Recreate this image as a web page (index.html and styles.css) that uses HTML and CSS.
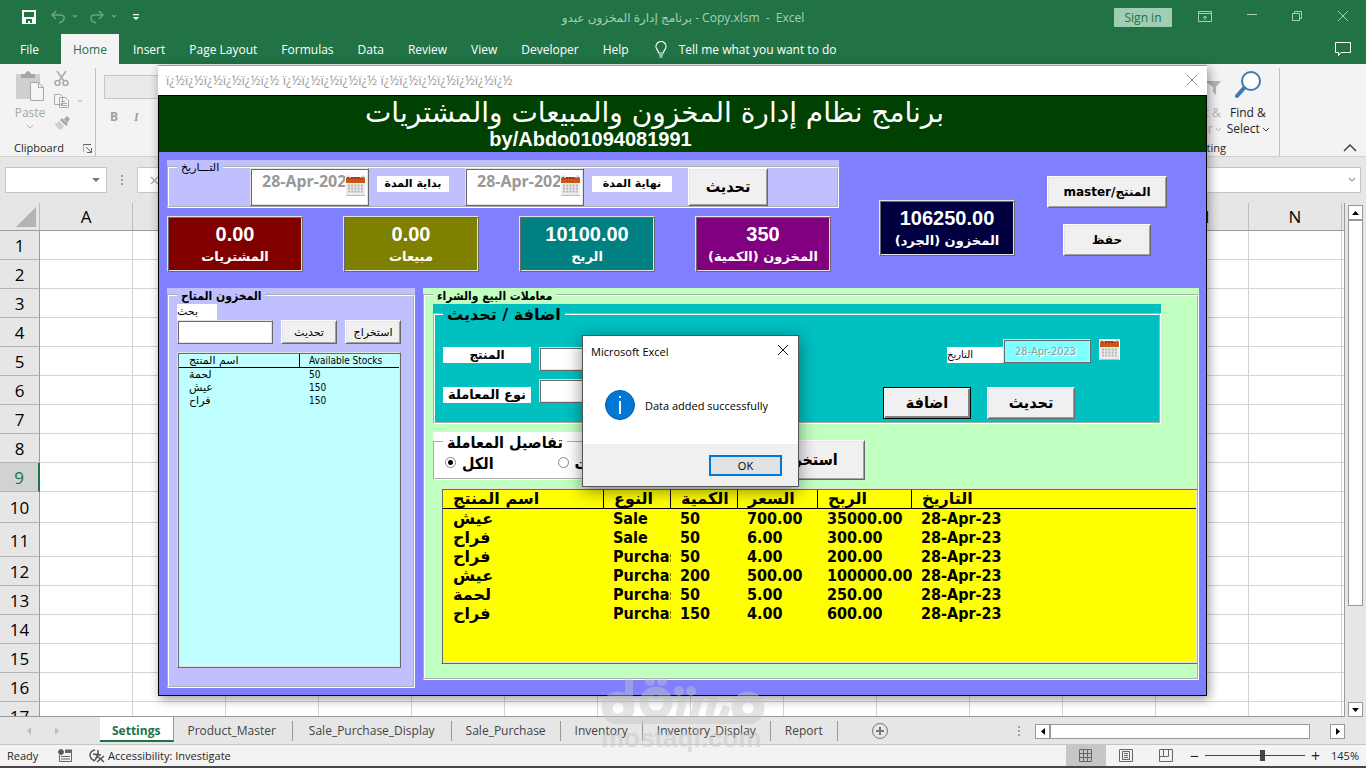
FILE: index.html
```html
<!DOCTYPE html>
<html lang="en">
<head>
<meta charset="utf-8">
<title>Excel - Inventory</title>
<link rel="stylesheet" href="styles.css">
</head>
<body>
<svg class="defs" aria-hidden="true">
  <symbol id="calendar" viewBox="0 0 21 21">
    <rect width="21" height="21" fill="#fff"/>
    <rect x="1" y="7" width="19" height="13" fill="#ececec"/>
    <rect x="1" y="2" width="19" height="6" fill="#c55a11"/>
    <path d="M3 3h15" stroke="#a02b2b" stroke-width="2" stroke-dasharray="2 1"/>
    <path d="M1 3a2 2 0 0 1 4 0M16 3a2 2 0 0 1 4 0" fill="none" stroke="#ddd" stroke-width="1.5"/>
    <path d="M3 10.500h15M3 13.500h15M3 16.500h15" stroke="#b5b5b5" stroke-width="2" stroke-dasharray="2 1.200"/>
    <path d="M1 20.500h19" stroke="#bbb"/>
  </symbol>
</svg>

<div class="app">
  <header class="titlebar">
    <div class="quick">
      <button class="icon" aria-label="Save"><svg width="14" height="14"><path d="M0 0h14v14H0z" fill="#fff"/><path d="M2 2h10v5H2zM4 9h6v4H8v-2H6v2H4z" fill="#217346"/></svg></button>
      <button class="icon faded" aria-label="Undo"><svg width="28" height="14" fill="none" stroke="#6aa383" stroke-width="1.500"><path d="M5 1 1 5l4 4M1 5h8q5 0 4 4-1 3-5 4M22 5l2 2 2-2"/></svg></button>
      <button class="icon faded" aria-label="Redo"><svg width="28" height="14" fill="none" stroke="#6aa383" stroke-width="1.500"><path d="m9 1 4 4-4 4M13 5H5Q0 5 1 9q1 3 5 4M22 5l2 2 2-2"/></svg></button>
      <button class="icon" aria-label="Customize"><svg width="6" height="7" fill="#fff"><path d="M0 0h6v1.200H0zM0 3h6L3 6z"/></svg></button>
    </div>
    <div class="doc-name">برنامج إدارة المخزون عبدو - Copy.xlsm&nbsp; -&nbsp; Excel</div>
    <div class="window-tools">
      <button class="sign-in">Sign in</button>
      <button class="icon" aria-label="Ribbon options"><svg width="14" height="12" fill="none" stroke="#a8cfb8"><path d="M.5.500h13v10H.5zM.5 2.500h13M7 9V5M5 7l2-2 2 2"/></svg></button>
      <button class="icon" aria-label="Minimize"><svg width="10" height="12" stroke="#a8cfb8"><path d="M0 3.500h10"/></svg></button>
      <button class="icon" aria-label="Restore"><svg width="10" height="12" fill="none" stroke="#a8cfb8"><path d="M.5 2.500h7v7h-7zM2.500 2V.5h7v7H8"/></svg></button>
      <button class="icon" aria-label="Close"><svg width="12" height="12" stroke="#a8cfb8"><path d="m1 0 10 10M11 0 1 10"/></svg></button>
    </div>
  </header>

  <nav class="ribbon-tabs">
    <a href="#" class="file">File</a>
    <a href="#" class="active">Home</a>
    <a href="#">Insert</a>
    <a href="#">Page Layout</a>
    <a href="#">Formulas</a>
    <a href="#">Data</a>
    <a href="#">Review</a>
    <a href="#">View</a>
    <a href="#">Developer</a>
    <a href="#">Help</a>
    <a href="#" class="tell"><svg width="12" height="17" fill="none" stroke="#fff" stroke-width="1.200"><path d="M3.500 12q0-2-1.500-3.500A5 5 0 1 1 10 8.500Q8.500 10 8.500 12zM4 14h4M4.500 16h3"/></svg>Tell me what you want to do</a>
    <button class="icon comments" aria-label="Comments"><svg width="16" height="15" fill="none" stroke="#fff"><path d="M.5.500h15v10H6L3.500 13.500v-3h-3z"/></svg></button>
  </nav>

  <div class="ribbon">
    <section class="clipboard">
      <div class="tools">
        <button class="paste">
          <svg width="28" height="30"><path d="M0 3h24v25H0z" fill="#cfcfcf"/><path d="M5 7V3h4q3-6 6 0h4v4z" fill="#a6a6a6"/><path d="M14.500 11.500h8l5 5v13h-13z" fill="#f5f5f5" stroke="#a6a6a6"/><path d="M22.500 11.500v5h5" fill="none" stroke="#a6a6a6"/></svg>
          <span>Paste</span>
          <svg width="6" height="4" fill="none" stroke="#b5b5b5"><path d="m0 0 3 3 3-3"/></svg>
        </button>
        <div class="small-tools">
          <svg width="28" height="15" fill="none" stroke="#a9a9a9" stroke-width="1.500"><path d="m3 0 7 10M12 0 5 10"/><circle cx="3.500" cy="12" r="2.500"/><circle cx="11.500" cy="12" r="2.500"/></svg>
          <svg width="28" height="14" fill="#f5f5f5" stroke="#a9a9a9"><path d="M.5.500h6l2 2v8h-8zM5.500 3.500h6l3 3v7h-9zM7 7.500h4M7 9.500h6M7 11.500h6"/><path d="m24 6 2 2 2-2" fill="none"/></svg>
          <svg width="28" height="14"><path d="m10 3 3-3 3 3-3 4z" fill="#a9a9a9"/><path d="m8 2 6 6-2 2-6-6z" fill="#a9a9a9"/><path d="m5 5 5 5q-2 4-4 4L0 8q3 0 5-3z" fill="#cfcfcf"/></svg>
        </div>
      </div>
      <div class="group-name"><span>Clipboard</span><svg width="9" height="9" fill="none" stroke="#666"><path d="M0 8V.5h8M3 3l5 5M8.500 4v4.500H4"/></svg></div>
    </section>
    <section class="font-group">
      <div class="font-box"></div>
      <div class="font-style"><b>B</b><i>I</i></div>
    </section>
    <section class="editing">
      <div class="tools">
        <div class="sort"><svg width="16" height="18" fill="#b5b5b5"><path d="M0 2h16l-5 6v8L8 13V8z"/></svg><span>Sort &amp;</span><span>Filter <svg width="5" height="4" fill="none" stroke="#b5b5b5"><path d="m0 0 2.500 3L5 0"/></svg></span></div>
        <button class="find"><svg width="28" height="28"><circle cx="17" cy="10" r="9" fill="#fff" stroke="#3d7ab8" stroke-width="2"/><path d="m10 17-7 8" stroke="#3d7ab8" stroke-width="4" stroke-linecap="round"/></svg><span>Find &amp;</span><span>Select <svg width="6" height="5" fill="none" stroke="#444"><path d="m0 1 3 3 3-3"/></svg></span></button>
      </div>
      <div class="group-name">Editing</div>
    </section>
    <button class="icon collapse" aria-label="Collapse"><svg width="14" height="8" fill="none" stroke="#444" stroke-width="1.500"><path d="m1 7 6-6 6 6"/></svg></button>
  </div>

  <div class="formula-bar">
    <div class="name-box"><svg width="8" height="4" fill="#777"><path d="M0 0h8L4 4z"/></svg></div>
    <div class="dots"><i></i><i></i><i></i></div>
    <div class="formula"><svg width="9" height="9" stroke="#b0b0b0" stroke-width="1.500"><path d="m1 1 7 7M8 1 1 8"/></svg><svg width="8" height="6" fill="none" stroke="#aaa" stroke-width="1.500"><path d="m1 1 3 3 3-3"/></svg></div>
  </div>

  <main class="sheet">
    <div class="grid-wrap">
      <table class="cells">
        <thead><tr><th class="corner"><svg width="20" height="20"><path d="M20 0v20H0z" fill="#b4b4b4"/></svg></th><th>A</th><th>B</th><th>C</th><th>D</th><th>E</th><th>F</th><th>G</th><th>H</th><th>I</th><th>J</th><th>K</th><th>L</th><th>M</th><th>N</th><th></th></tr></thead>
        <tbody>
          <tr><th>1</th><td colspan="15"></td></tr>
          <tr><th>2</th><td colspan="15"></td></tr>
          <tr><th>3</th><td colspan="15"></td></tr>
          <tr><th>4</th><td colspan="15"></td></tr>
          <tr><th>5</th><td colspan="15"></td></tr>
          <tr><th>6</th><td colspan="15"></td></tr>
          <tr><th>7</th><td colspan="15"></td></tr>
          <tr><th>8</th><td colspan="15"></td></tr>
          <tr class="current"><th>9</th><td colspan="15"></td></tr>
          <tr class="taller"><th>10</th><td colspan="15"></td></tr>
          <tr class="tallest"><th>11</th><td colspan="15"></td></tr>
          <tr><th>12</th><td colspan="15"></td></tr>
          <tr><th>13</th><td colspan="15"></td></tr>
          <tr><th>14</th><td colspan="15"></td></tr>
          <tr><th>15</th><td colspan="15"></td></tr>
          <tr><th>16</th><td colspan="15"></td></tr>
          <tr><th>17</th><td colspan="15"></td></tr>
        </tbody>
      </table>
    </div>
    <div class="v-scroll">
      <button class="arrow" aria-label="Up"><svg width="7" height="4"><path d="m0 4 3.500-4L7 4z"/></svg></button>
      <div class="thumb"></div>
      <button class="arrow down" aria-label="Down"><svg width="7" height="4"><path d="M0 0h7L3.500 4z"/></svg></button>
    </div>
  </main>

  <nav class="sheet-tabs">
    <div class="tab-nav"><svg width="4" height="8" fill="#bcbcbc"><path d="M4 0v8L0 4z"/></svg><svg width="4" height="8" fill="#bcbcbc"><path d="M0 0v8l4-4z"/></svg></div>
    <a href="#" class="active">Settings</a>
    <a href="#">Product_Master</a>
    <a href="#">Sale_Purchase_Display</a>
    <a href="#" class="snug">Sale_Purchase</a>
    <a href="#" class="snug">Inventory</a>
    <a href="#" class="snug">Inventory_Display</a>
    <a href="#" class="snug">Report</a>
    <button class="icon add" aria-label="New sheet"><svg width="16" height="16" fill="none" stroke="#777"><circle cx="8" cy="8" r="7.500"/><path d="M4 8h8M8 4v8" stroke-width="2"/></svg></button>
    <div class="dots"><i></i><i></i><i></i></div>
    <div class="h-scroll">
      <button class="arrow" aria-label="Left"><svg width="4" height="7"><path d="M4 0v7L0 3.500z"/></svg></button>
      <div class="thumb"></div>
      <button class="arrow" aria-label="Right"><svg width="4" height="7"><path d="M0 0v7l4-3.500z"/></svg></button>
    </div>
  </nav>

  <footer class="status">
    <span class="ready">Ready</span>
    <svg width="14" height="13" fill="none" stroke="#666"><path d="M1.500 6v6.500h12V3.500H7M3 7.500h9M3 10h9"/><path d="M7 2h7" stroke-width="3"/><circle cx="3" cy="3" r="2.500" fill="#555"/></svg>
    <svg width="16" height="14" fill="none" stroke="#555" stroke-width="1.500"><path d="M6 1Q1 2 1 6t5 6M4 5l8 1M9 1v5l-3 5M7 6l8 7M15 7l-7 6"/></svg>
    <span class="access">Accessibility: Investigate</span>
    <div class="views">
      <button class="selected" aria-label="Normal"><svg width="13" height="13" fill="none" stroke="#666"><path d="M.5.500h12v12H.5zM4.500 0v13M8.500 0v13M0 4.500h13M0 8.500h13"/></svg></button>
      <button aria-label="Page layout"><svg width="14" height="13" fill="none" stroke="#666"><path d="M.5.500h13v12H.5zM3.500 2.500h7v8h-7zM5 4.500h4M5 6.500h4M5 8.500h4"/></svg></button>
      <button aria-label="Page break"><svg width="14" height="13" fill="none" stroke="#666"><path d="M.5.500h13v12H.5zM4.500 0v7.500h5V0M0 7.500h4"/></svg></button>
    </div>
    <div class="zoom"><span>−</span><input type="range" min="0" max="100" value="58" aria-label="Zoom"><span>+</span><output>145%</output></div>
  </footer>

  <section class="userform">
    <div class="form-title"><span>ï¿½ï¿½ï¿½ï¿½ï¿½ï¿½ ï¿½ï¿½ï¿½ï¿½ï¿½ ï¿½ï¿½ï¿½ï¿½ï¿½ï¿½ï¿½</span><button class="icon" aria-label="Close form"><svg width="12" height="12" stroke="#888"><path d="m1 0 10 10M11 0 1 10"/></svg></button></div>
    <div class="form-client">
      <header class="banner"><h1 dir="rtl">برنامج نظام إدارة المخزون والمبيعات والمشتريات</h1><p>by/Abdo01094081991</p></header>
      <div class="form-body">
        <div class="summary">
          <div class="summary-left">
            <div class="frame lilac dates">
              <fieldset><legend>التـــاريخ</legend>
                <div class="date-field"><input id="from" value="28-Apr-2023" disabled><svg class="cal" width="21" height="21"><use href="#calendar"/></svg></div>
                <label class="tag" for="from">بداية المدة</label>
                <div class="date-field"><input id="to" value="28-Apr-2023" disabled><svg class="cal" width="21" height="21"><use href="#calendar"/></svg></div>
                <label class="tag wide" for="to">نهاية المدة</label>
                <button class="btn big">تحديث</button>
              </fieldset>
            </div>
            <div class="cards">
              <div class="card maroon"><strong>0.00</strong><span>المشتريات</span></div>
              <div class="card olive"><strong>0.00</strong><span>مبيعات</span></div>
              <div class="card teal"><strong>10100.00</strong><span>الربح</span></div>
              <div class="card purple"><strong>350</strong><span dir="rtl">المخزون (الكمية)</span></div>
            </div>
          </div>
          <div class="card navy"><strong>106250.00</strong><span dir="rtl">المخزون (الجرد)</span></div>
          <div class="side-buttons"><button class="btn master">master/المنتج</button><button class="btn">حفظ</button></div>
        </div>

        <div class="panels">
          <div class="frame lilac stock">
            <fieldset><legend>المخزون المتاح</legend>
              <label class="search-label" for="search">بحث</label>
              <div class="search-row"><input id="search" class="box"><button class="btn">تحديث</button><button class="btn">استخراج</button></div>
              <div class="list cyan">
                <table><thead><tr><th>اسم المنتج</th><th>Available Stocks</th></tr></thead>
                <tbody><tr><td>لحمة</td><td>50</td></tr><tr><td>عيش</td><td>150</td></tr><tr><td>فراح</td><td>150</td></tr></tbody></table>
              </div>
            </fieldset>
          </div>

          <div class="frame mint trade">
            <fieldset><legend>معاملات البيع والشراء</legend>
              <div class="frame aqua entry">
                <fieldset><legend>اضافة / تحديث</legend>
                  <div class="entry-fields">
                    <label class="tag" for="product">المنتج</label><input id="product" class="box">
                    <label class="tag low" for="kind">نوع المعاملة</label><input id="kind" class="box">
                  </div>
                  <div class="entry-side">
                    <div class="entry-date"><label for="day">التاريخ</label><input id="day" value="28-Apr-2023" disabled><svg width="21" height="21"><use href="#calendar"/></svg></div>
                    <div class="entry-buttons"><button class="btn big default">اضافة</button><button class="btn big">تحديث</button></div>
                  </div>
                </fieldset>
              </div>
              <div class="filter-row">
                <div class="frame white details">
                  <fieldset><legend>تفاصيل المعاملة</legend>
                    <label><input type="radio" name="show" checked>الكل</label>
                    <label><input type="radio" name="show">مبيعات</label>
                  </fieldset>
                </div>
                <button class="btn big">استخراج</button>
              </div>
              <div class="list yellow">
                <table>
                  <colgroup><col class="c-name"><col class="c-kind"><col class="c-kind"><col class="c-price"><col class="c-profit"><col></colgroup>
                  <thead><tr><th>اسم المنتج</th><th>النوع</th><th>الكمية</th><th>السعر</th><th>الربح</th><th>التاريخ</th></tr></thead>
                  <tbody>
                    <tr><td>عيش</td><td>Sale</td><td>50</td><td>700.00</td><td>35000.00</td><td>28-Apr-23</td></tr>
                    <tr><td>فراح</td><td>Sale</td><td>50</td><td>6.00</td><td>300.00</td><td>28-Apr-23</td></tr>
                    <tr><td>فراح</td><td>Purchase</td><td>50</td><td>4.00</td><td>200.00</td><td>28-Apr-23</td></tr>
                    <tr><td>عيش</td><td>Purchase</td><td>200</td><td>500.00</td><td>100000.00</td><td>28-Apr-23</td></tr>
                    <tr><td>لحمة</td><td>Purchase</td><td>50</td><td>5.00</td><td>250.00</td><td>28-Apr-23</td></tr>
                    <tr><td>فراح</td><td>Purchase</td><td>150</td><td>4.00</td><td>600.00</td><td>28-Apr-23</td></tr>
                  </tbody>
                </table>
              </div>
            </fieldset>
          </div>
        </div>
      </div>
    </div>
  </section>

  <section class="message" role="dialog" aria-label="Microsoft Excel">
    <div class="message-title"><span>Microsoft Excel</span><button class="icon" aria-label="Close message"><svg width="12" height="12" stroke="#111"><path d="m1 0 10 10M11 0 1 10"/></svg></button></div>
    <div class="message-text"><svg width="30" height="30"><circle cx="15" cy="15" r="14.500" fill="#0078d7" stroke="#0a5ba0"/><path d="M15 6v2M15 11v13" stroke="#fff" stroke-width="2"/></svg><span>Data added successfully</span></div>
    <div class="message-actions"><button>OK</button></div>
  </section>

  <div class="watermark" aria-hidden="true">
    <svg width="164" height="48" fill="none" stroke="#c4c4c4" stroke-width="11">
      <circle cx="17" cy="30" r="11"/><path d="M17 42h130" stroke-width="8"/><path d="M28 32V0" stroke-width="8"/>
      <circle cx="55" cy="25" r="12" stroke-width="9"/><circle cx="147" cy="30" r="11"/>
      <path d="m78 38 5-18M93 38l5-18M108 38l5-18M121 40l5-12" stroke-width="8"/>
      <g fill="#c4c4c4" stroke="none"><circle cx="49" cy="3" r="5"/><circle cx="61" cy="3" r="5"/><circle cx="78" cy="13" r="5"/><circle cx="90" cy="13" r="5"/></g>
    </svg>
    <span>mostaql.com</span>
  </div>
</div>
</body>
</html>
```
FILE: styles.css
```css
* { box-sizing: border-box; }
body { margin: 0; font-family: "Open Sans", "Noto Sans", sans-serif; font-size: 12px; color: #262626; }
button, input { font: inherit; color: inherit; margin: 0; padding: 0; }
svg { display: block; flex: none; }
a { color: inherit; text-decoration: none; }
.defs { position: absolute; width: 0; height: 0; }
.icon { background: none; border: 0; display: flex; align-items: center; justify-content: center; }

.app { position: relative; display: flex; flex-direction: column; height: 100vh; min-height: 600px; overflow: hidden; background: #e6e6e6; border-bottom: 2px solid #484648; }

/* Title bar */
.titlebar { display: grid; grid-template-columns: 1fr auto 1fr; align-items: center; height: 34px; flex: none; background: #217346; color: #a8cfb8; }
.quick { display: flex; align-items: center; padding-left: 22px; gap: 15px; }
.quick .faded + .faded { margin-left: -4px; }
.doc-name { font-size: 12px; font-family: "Open Sans", "DejaVu Sans", sans-serif; white-space: pre; }
.window-tools { display: flex; align-items: center; justify-content: flex-end; gap: 35px; padding-right: 17px; }
.sign-in { width: 58px; height: 19px; margin-right: -9px; border: 0; border-radius: 1px; background: #a0ceb2; color: #217346; line-height: 19px; }

/* Ribbon tabs */
.ribbon-tabs { display: flex; height: 30px; flex: none; align-items: stretch; background: #217346; color: #fff; padding-left: 6px; }
.ribbon-tabs a { display: flex; align-items: center; padding: 0 12px; white-space: nowrap; }
.ribbon-tabs .file { padding: 0 22px 0 14px; }
.ribbon-tabs .active { background: #f3f3f3; color: #217346; }
.ribbon-tabs .active + a { padding-left: 14px; }
.ribbon-tabs .tell { gap: 12px; padding-left: 14px; }
.comments { margin: 0 15px 0 auto; }

/* Ribbon */
.ribbon { display: flex; height: 93px; flex: none; background: #f3f3f3; border-bottom: 1px solid #d2d0ce; padding: 4px 0 0; line-height: 16px; }
.clipboard { display: flex; flex-direction: column; justify-content: space-between; width: 96px; border-right: 1px solid #c0c0c0; padding: 3px 2px 0 14px; }
.tools { display: flex; }
.paste, .find { background: none; border: 0; display: flex; flex-direction: column; align-items: center; }
.paste { color: #a6a6a6; gap: 4px; width: 32px; }
.small-tools { display: flex; flex-direction: column; gap: 8px; padding-left: 8px; }
.group-name { display: flex; justify-content: space-between; align-items: center; font-size: 11px; padding-right: 1px; }
.font-group { padding: 7px 0 0 8px; flex: 1; }
.font-box { width: 120px; height: 24px; background: #eaeaea; border: 1px solid #c6c6c6; }
.font-style { display: flex; gap: 16px; padding: 10px 6px; color: #a0a0a0; font-size: 12px; }
.font-style i { font-family: "Liberation Serif", serif; font-weight: bold; }
.editing { display: flex; flex-direction: column; justify-content: space-between; width: 100px; border-right: 1px solid #c0c0c0; }
.editing .tools { justify-content: flex-end; gap: 6px; padding-right: 10px; }
.sort { display: flex; flex-direction: column; align-items: flex-end; color: #b5b5b5; padding-top: 11px; }
.sort > svg { margin-bottom: 8px; }
.sort span svg, .find span svg { display: inline-block; vertical-align: middle; }
.find { padding-top: 3px; }
.find > svg { margin-bottom: 6px; }
.editing .group-name { padding-left: 11px; }
.collapse { align-self: flex-end; margin: 0 9px 4px 63px; }

/* Formula bar */
.formula-bar { display: flex; height: 46px; flex: none; padding: 10px 5px; gap: 14px; }
.name-box, .formula { height: 26px; background: #fff; border: 1px solid #c6c6c6; display: flex; align-items: center; }
.name-box { width: 102px; justify-content: flex-end; padding-right: 6px; }
.formula { flex: 1; justify-content: space-between; padding: 0 4px 0 12px; }
.dots { display: flex; flex-direction: column; gap: 2px; justify-content: center; width: 2px; }
.dots i { width: 2px; height: 2px; background: #a0a0a0; }

/* Sheet */
.sheet { display: flex; flex: 1; min-height: 0; }
.grid-wrap { flex: 1; overflow: hidden; border-right: 1px solid #9b9b9b; border-bottom: 1px solid #9b9b9b; background: #fff; }
.cells { table-layout: fixed; border-collapse: separate; border-spacing: 0; width: 1435px; font-size: 17px; color: #000; }
.cells th { font-weight: normal; padding: 0; background: #e6e6e6; }
.cells thead th { width: 93px; height: 28px; line-height: 24px; border-right: 1px solid #bcbcbc; border-bottom: 1px solid #9b9b9b; }
.cells thead .corner { width: 40px; padding-left: 16px; }
.cells tbody tr { height: 29px; line-height: 24px; }
.cells tbody .taller { height: 31px; }
.cells tbody .tallest { height: 34px; }
.cells tbody th { padding-top: 2px; border-right: 1px solid #9b9b9b; border-bottom: 1px solid #b4b4b4; }
.cells td { padding: 0; border-bottom: 1px solid #d4d4d4; background: repeating-linear-gradient(to right, transparent 0 92px, #d4d4d4 92px 93px); }
.cells .current th { background: #d2d2d2; color: #217346; border-right: 2px solid #217346; }
.v-scroll { width: 21px; padding: 2px 3px 0; display: flex; flex-direction: column; }
.arrow { width: 15px; height: 15px; flex: none; background: #fff; border: 1px solid #999; display: flex; align-items: center; justify-content: center; }
.v-scroll .thumb { height: 386px; background: #fff; border: 1px solid #999; }
.v-scroll .down { margin-top: auto; }

/* Sheet tabs */
.sheet-tabs { display: flex; height: 28px; flex: none; align-items: flex-start; padding-right: 21px; border-bottom: 1px solid #c6c6c6; color: #444; }
.tab-nav { width: 100px; height: 27px; display: flex; align-items: center; justify-content: center; gap: 24px; padding-right: 14px; }
.sheet-tabs a { height: 20px; margin-top: 4px; line-height: 20px; padding: 0 16px; border-right: 1px solid #999; }
.sheet-tabs a.active { height: 25px; margin-top: 0; padding: 4px 13px 0 12px; background: #fff; border-right: 1px solid #999; border-bottom: 2px solid #217346; color: #217346; font-weight: bold; }
.sheet-tabs a.active + a { padding-left: 13px; }
.sheet-tabs a.snug { padding: 0 14px; }
.add { margin: 6px 0 0 34px; }
.sheet-tabs .dots { margin: 9px 15px 0 auto; }
.h-scroll { display: flex; width: 310px; margin-top: 7px; }
.h-scroll .thumb { width: 260px; height: 15px; background: #fff; border: 1px solid #999; margin-right: auto; }

/* Status bar */
.status { display: flex; height: 21px; flex: none; align-items: center; background: #f3f3f3; font-size: 11px; padding: 0 7px; }
.ready { width: 51px; }
.status > svg + svg { margin-left: 17px; }
.access { margin-left: 3px; }
.views { display: flex; align-self: stretch; margin-left: auto; }
.views button { width: 40px; border: 0; background: none; display: flex; align-items: center; justify-content: center; }
.views .selected { background: #c6c6c6; }
.zoom { display: flex; align-items: center; gap: 6px; padding-left: 4px; }
.zoom span { font-size: 16px; line-height: 16px; }
.zoom output { padding-left: 5px; }
.zoom input { appearance: none; width: 100px; height: 12px; background: linear-gradient(#444, #444) center / 100% 1px no-repeat; }
.zoom input::-webkit-slider-thumb { appearance: none; width: 5px; height: 11px; background: #444; }

/* User form window */
.userform { position: absolute; left: 158px; top: 65px; width: 1049px; border-top: 1px solid #999; box-shadow: 2px 3px 10px rgba(0, 0, 0, .4); font-family: "DejaVu Sans", sans-serif; color: #000; line-height: 1; }
.form-title { display: flex; justify-content: space-between; align-items: center; height: 29px; padding: 0 9px 0 8px; background: #fff; color: #999; font-family: "Open Sans", sans-serif; font-size: 13px; }
.form-client { border: 1px solid #000; background: #8080ff; }
.banner { height: 56px; background: #004000; color: #fff; text-align: center; }
.banner h1 { margin: 0; padding-right: 56px; font: 28px/34px "DejaVu Sans", sans-serif; }
.banner p { margin: 0; padding-right: 184px; font: bold 20px/18px "Liberation Sans", sans-serif; }
.form-body { padding: 8px 7px 7px 8px; }
.summary, .summary-left, .side-buttons, .cards, .panels { display: flex; }
.summary-left { flex-direction: column; gap: 8px; width: 672px; }

.frame { padding-top: 6px; }
.frame > fieldset { position: relative; margin: 0; padding: 0; border: 2px groove #fff; min-width: 0; }
.frame > fieldset > legend { position: absolute; left: 8px; top: -8px; padding: 0 4px; line-height: 16px; font-weight: bold; font-size: 12px; white-space: nowrap; }
.lilac, .lilac > fieldset > legend { background: #c0c0ff; }
.mint, .mint > fieldset > legend { background: #c0ffc0; }
.aqua, .aqua > fieldset > legend { background: #00c0c0; }
.white, .white > fieldset > legend { background: #fff; }
.frame.stock > fieldset > legend, .frame.trade > fieldset > legend { font-family: "DejaVu Sans Condensed", "DejaVu Sans", sans-serif; }

.btn { background: #f0f0f0; border: 1px solid; border-color: #fff #696969 #696969 #fff; box-shadow: inset 1px 1px 0 #e3e3e3, inset -1px -1px 0 #a0a0a0; font-size: 11px; }
.btn.big { font-family: "DejaVu Sans Condensed", "DejaVu Sans", sans-serif; font-size: 16px; font-weight: bold; }
.btn.default { border-color: #000; box-shadow: inset 1px 1px 0 #fff, inset -2px -2px 0 #808080; }
.box, .card, .list, .date-field input, .entry-date input { border: 1px solid; border-color: #e3e3e3 #696969 #696969 #e3e3e3; box-shadow: inset 1px 1px 0 #696969, inset -1px -1px 0 #e3e3e3; background: #fff; }
.tag { display: block; width: 72px; height: 16px; background: #fff; text-align: center; font-weight: bold; font-size: 11px; line-height: 16px; }

.dates fieldset { display: flex; height: 42px; padding-left: 81px; }
.frame.dates > fieldset > legend { font-size: 11px; font-weight: normal; }
.date-field { position: relative; width: 119px; margin-right: 8px; }
.date-field input { width: 100%; height: 100%; padding: 0 22px 12px 11px; font: bold 16px "Noto Sans", sans-serif; color: #999; }
.date-field .cal { position: absolute; right: 3px; top: 7px; }
.dates .tag { margin: 8px 16px 0 0; }
.dates .tag.wide { width: 80px; }
.dates .btn { width: 80px; }

.cards { gap: 40px; }
.card { display: flex; flex-direction: column; align-items: center; width: 136px; height: 56px; padding-top: 7px; gap: 6px; color: #fff; }
.card strong { font: bold 20px/20px "Liberation Sans", sans-serif; }
.card span { font-weight: bold; font-size: 13px; }
.maroon { background: #800000; }
.olive { background: #808000; }
.teal { background: #008080; }
.purple { background: #800080; }
.navy { background: #000040; margin: 40px 0 0 40px; }
.side-buttons { flex-direction: column; align-items: center; gap: 16px; margin: 16px 0 0 32px; }
.side-buttons .btn { width: 88px; height: 32px; font-weight: bold; font-size: 12px; }
.side-buttons .master { width: 120px; }

.panels { gap: 8px; margin-top: 16px; align-items: flex-start; }
.stock { width: 248px; }
.stock fieldset { height: 394px; padding: 8px 12px 0 8px; }
.search-label { display: block; width: 40px; height: 16px; background: #fff; font-size: 11px; line-height: 16px; }
.search-row { display: flex; gap: 8px; }
.search-row .box { width: 96px; height: 24px; }
.search-row .btn { width: 56px; height: 24px; }
.list { padding: 1px; overflow: hidden; }
.list table { width: 100%; table-layout: fixed; border-spacing: 0; }
.list th, .list td { padding: 0 0 0 10px; text-align: left; overflow: hidden; white-space: nowrap; }
.list th { border-bottom: 1px solid #000; border-right: 1px solid #000; }
.list th:last-child { border-right: 0; }
.list td + td { padding-left: 9px; font-family: "DejaVu Sans Condensed", "DejaVu Sans", sans-serif; }
.cyan { height: 316px; margin-top: 8px; background: #c0ffff; font-size: 11px; }
.cyan th { height: 14px; width: 121px; font-weight: normal; }
.cyan th:last-child { width: auto; padding-left: 9px; font-family: "DejaVu Sans Condensed", "DejaVu Sans", sans-serif; font-size: 10px; }
.cyan td { height: 13px; }
.cyan td + td { font-size: 10px; }

.trade { flex: 1; }
.trade > fieldset { height: 386px; padding: 8px 0 0 8px; }
.entry { width: 728px; padding-top: 9px; }
.entry fieldset { display: flex; justify-content: space-between; height: 111px; padding: 24px 39px 0 8px; }
.frame.entry > fieldset > legend { font-size: 16px; }
.entry-fields { display: grid; grid-template-columns: 88px 160px; grid-auto-rows: 24px; gap: 8px; padding-top: 8px; align-content: start; }
.entry .tag { width: 88px; font-size: 12px; }
.entry .low { align-self: end; font-size: 13px; }
.entry-date { display: flex; align-items: flex-end; padding-left: 64px; }
.entry-date label { width: 56px; height: 16px; background: #fff; font-size: 10px; line-height: 16px; }
.entry-date input { width: 88px; height: 24px; padding-left: 11px; background: #80ffff; color: #999; font-family: "DejaVu Sans Condensed", "DejaVu Sans", sans-serif; font-size: 11px; text-shadow: 1px 1px 0 #fff; }
.entry-date svg { margin: 0 0 3px 8px; }
.entry-buttons { display: flex; gap: 16px; margin-top: 24px; }
.entry-buttons .btn { width: 88px; height: 32px; }

.filter-row { display: flex; align-items: flex-end; gap: 16px; margin-top: 8px; }
.details { width: 302px; padding-top: 9px; font-family: "DejaVu Sans Condensed", "DejaVu Sans", sans-serif; }
.details fieldset { display: flex; gap: 64px; height: 39px; padding: 11px 10px 0; font-weight: bold; font-size: 16px; }
.frame.details > fieldset > legend { font-size: 16px; }
.details label { display: flex; align-items: center; gap: 6px; height: 20px; }
.details input { appearance: none; width: 11px; height: 11px; margin-bottom: 4px; border: 1px solid #888; border-radius: 50%; background: #fff; }
.details input:checked { background: radial-gradient(#000 0 2px, #fff 3px); }
.filter-row .btn { width: 114px; height: 40px; }
.yellow { height: 176px; margin: 8px 0 0 8px; background: #ff0; font-size: 16px; font-weight: bold; border-right: 0; }
.yellow th { height: 19px; }
.yellow td { height: 19px; }
.c-name { width: 161px; }
.c-kind { width: 67px; }
.c-price { width: 80px; }
.c-profit { width: 94px; }

/* Message box */
.message { position: absolute; left: 582px; top: 335px; width: 217px; background: #fff; border: 1px solid #555; box-shadow: 0 4px 16px rgba(0, 0, 0, .45); color: #000; font-size: 11px; }
.message-title { display: flex; justify-content: space-between; align-items: center; height: 30px; padding: 0 9px 0 8px; }
.message-text { display: flex; align-items: center; gap: 10px; height: 78px; padding: 0 22px; white-space: nowrap; }
.message-actions { display: flex; justify-content: flex-end; padding: 11px 16px 10px; background: #f0f0f0; }
.message-actions button { width: 73px; height: 21px; background: #e1e1e1; border: 2px solid #0078d7; line-height: 16px; }

.watermark { position: absolute; left: 601px; top: 678px; opacity: .45; font: bold 26px/24px "Liberation Sans", sans-serif; color: #c4c4c4; pointer-events: none; }
```
